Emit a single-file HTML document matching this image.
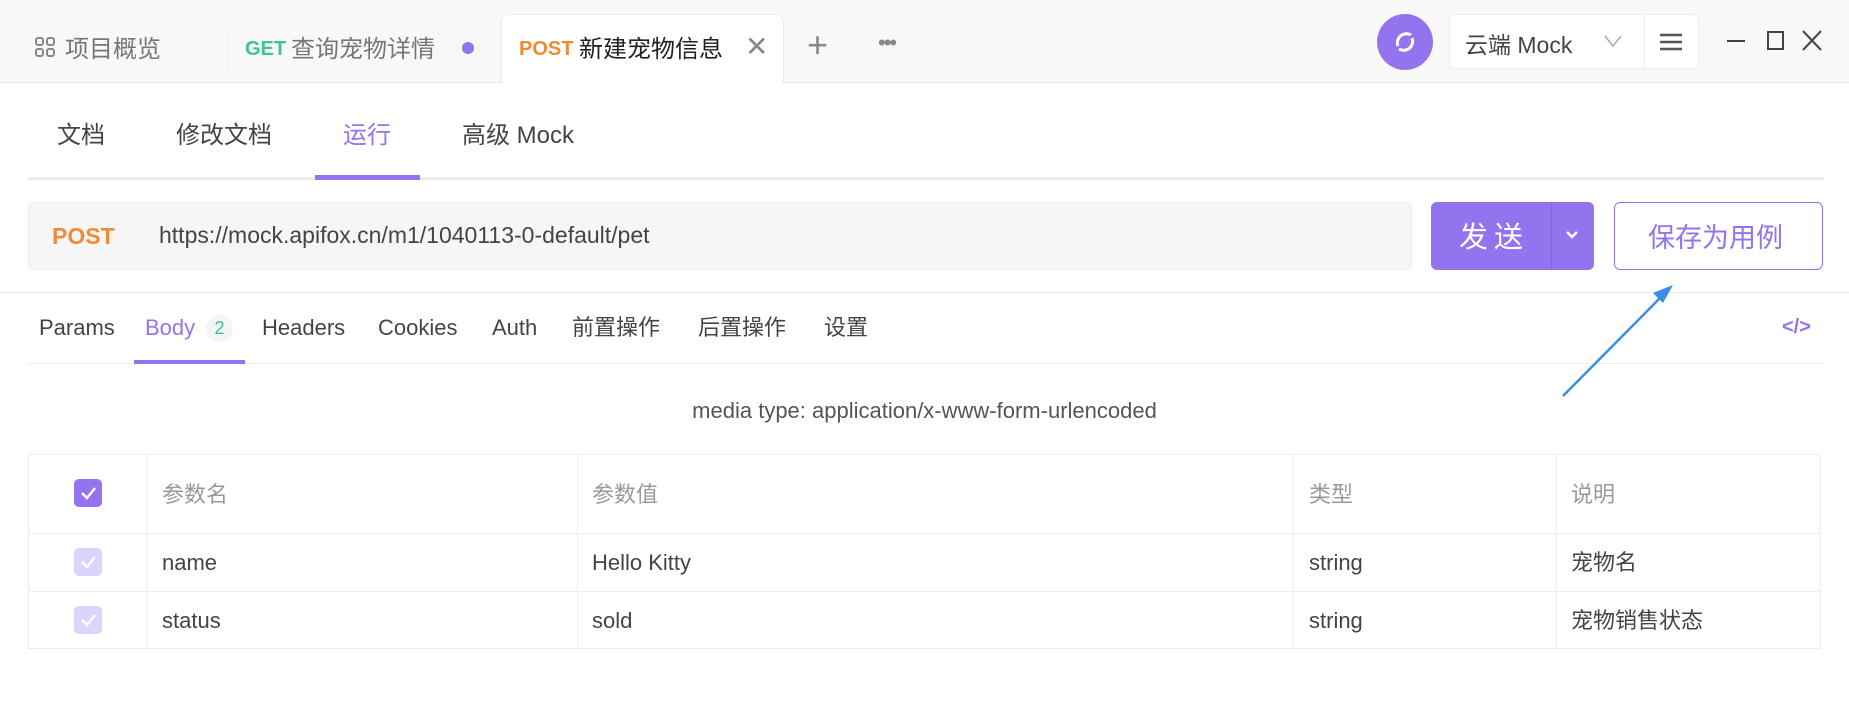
<!DOCTYPE html>
<html><head><meta charset="utf-8"><style>
*{margin:0;padding:0;box-sizing:border-box}
body{width:1849px;height:712px;background:#fff;font-family:"Liberation Sans","Noto Sans CJK SC",sans-serif;position:relative;overflow:hidden;color:#333}
.a{position:absolute;white-space:nowrap}
</style></head><body>
<div class="a" style="left:0;top:0;width:1849px;height:83px;background:#f8f8f9;border-bottom:1px solid #e8e8ec"></div>
<svg class="a" style="left:34px;top:36px" width="22" height="22" viewBox="0 0 22 22" fill="none" stroke="#888" stroke-width="2"><rect x="2" y="2" width="7" height="7" rx="2"/><rect x="13" y="2" width="7" height="7" rx="2"/><rect x="2" y="13" width="7" height="7" rx="2"/><rect x="13" y="13" width="7" height="7" rx="2"/></svg>
<div class="a" style="left:65px;top:29px;font-size:24px;color:#777">项目概览</div>
<div class="a" style="left:228px;top:30px;width:1px;height:40px;background:#eee"></div>
<div class="a" style="left:245px;top:38px;font-size:20px;font-weight:bold;color:#3cc58f">GET</div>
<div class="a" style="left:291px;top:29px;font-size:24px;color:#777">查询宠物详情</div>
<div class="a" style="left:462px;top:42px;width:12px;height:12px;border-radius:50%;background:#9373ee"></div>
<div class="a" style="left:501px;top:14px;width:283px;height:70px;background:#fff;border:1px solid #ececf0;border-bottom:none;border-radius:8px 8px 0 0"></div>
<div class="a" style="left:519px;top:38px;font-size:20px;font-weight:bold;color:#f08a35">POST</div>
<div class="a" style="left:579px;top:29px;font-size:24px;color:#222">新建宠物信息</div>
<div class="a" style="left:745px;top:30px;font-size:28px;color:#888">✕</div>
<div class="a" style="left:807px;top:24px;font-size:36px;color:#888;font-weight:300">+</div>
<div class="a" style="left:878px;top:30px;font-size:22px;color:#888;letter-spacing:-2px">•••</div>
<div class="a" style="left:1377px;top:14px;width:56px;height:56px;border-radius:50%;background:#9373ee"></div>
<svg class="a" style="left:1391px;top:28px" width="28" height="28" viewBox="0 0 28 28" fill="none" stroke="#fff" stroke-width="3"><path d="M20 7a9 9 0 0 0-13 11"/><path d="M8 21a9 9 0 0 0 13-11"/></svg>
<div class="a" style="left:1449px;top:14px;width:250px;height:55px;background:#fff;border:1px solid #eee;border-radius:6px"></div>
<div class="a" style="left:1644px;top:14px;width:1px;height:55px;background:#eee"></div>
<div class="a" style="left:1465px;top:26px;font-size:23px;color:#444">云端 Mock</div>
<svg class="a" style="left:1604px;top:34px" width="18" height="14" fill="none" stroke="#aaa" stroke-width="1.5"><path d="M1 2l8 10 8-10"/></svg>
<svg class="a" style="left:1660px;top:33px" width="22" height="18" stroke="#555" stroke-width="2.5"><path d="M0 2h22M0 9h22M0 16h22"/></svg>
<svg class="a" style="left:1725px;top:28px" width="100" height="26" fill="none" stroke="#444" stroke-width="2"><path d="M2 13h18"/><rect x="43" y="4" width="15" height="17"/><path d="M78 3l18 19M96 3L78 22"/></svg>
<div class="a" style="left:57px;top:115px;font-size:24px;color:#444">文档</div>
<div class="a" style="left:176px;top:115px;font-size:24px;color:#444">修改文档</div>
<div class="a" style="left:343px;top:115px;font-size:24px;color:#9373ee">运行</div>
<div class="a" style="left:462px;top:115px;font-size:24px;color:#444">高级 Mock</div>
<div class="a" style="left:28px;top:177px;width:1796px;height:3px;background:#ebebeb"></div>
<div class="a" style="left:315px;top:175px;width:105px;height:5px;background:#9373ee"></div>
<div class="a" style="left:28px;top:202px;width:1384px;height:68px;background:#f6f6f7;border:1px solid #ebebeb;border-radius:6px"></div>
<div class="a" style="left:52px;top:223px;font-size:23px;font-weight:bold;color:#f08a35">POST</div>
<div class="a" style="left:159px;top:222px;font-size:23px;color:#444">https://mock.apifox.cn/m1/1040113-0-default/pet</div>
<div class="a" style="left:1431px;top:202px;width:163px;height:68px;background:#9373ee;border-radius:6px"></div>
<div class="a" style="left:1551px;top:202px;width:1px;height:68px;background:#8463dd"></div>
<div class="a" style="left:1459px;top:214px;font-size:29px;color:#fff;letter-spacing:6px">发送</div>
<svg class="a" style="left:1565px;top:230px" width="14" height="10" fill="none" stroke="#fff" stroke-width="2.5"><path d="M2 2l5 5 5-5"/></svg>
<div class="a" style="left:1614px;top:202px;width:209px;height:68px;background:#fff;border:1.5px solid #9373ee;border-radius:6px"></div>
<div class="a" style="left:1648px;top:216px;font-size:27px;color:#9373ee">保存为用例</div>
<div class="a" style="left:0;top:292px;width:1849px;height:1px;background:#ebebf0"></div>
<div class="a" style="left:39px;top:315px;font-size:22px;color:#444">Params</div>
<div class="a" style="left:145px;top:315px;font-size:22px;color:#9373ee">Body</div>
<div class="a" style="left:206px;top:315px;width:27px;height:27px;border-radius:50%;background:#f4f4f4;color:#3cc58f;font-size:18px;text-align:center;line-height:27px">2</div>
<div class="a" style="left:262px;top:315px;font-size:22px;color:#444">Headers</div>
<div class="a" style="left:378px;top:315px;font-size:22px;color:#444">Cookies</div>
<div class="a" style="left:492px;top:315px;font-size:22px;color:#444">Auth</div>
<div class="a" style="left:572px;top:310px;font-size:22px;color:#444">前置操作</div>
<div class="a" style="left:698px;top:310px;font-size:22px;color:#444">后置操作</div>
<div class="a" style="left:824px;top:310px;font-size:22px;color:#444">设置</div>
<div class="a" style="left:1782px;top:316px;font-size:20px;color:#9373ee;font-weight:bold">&lt;/&gt;</div>
<div class="a" style="left:28px;top:363px;width:1796px;height:1px;background:#eee"></div>
<div class="a" style="left:134px;top:360px;width:111px;height:4px;background:#9373ee"></div>
<div class="a" style="left:0;top:398px;width:1849px;text-align:center;font-size:22px;color:#555">media type: application/x-www-form-urlencoded</div>
<svg class="a" style="left:0;top:0" width="1849" height="712"><line x1="1563" y1="396" x2="1664" y2="294" stroke="#3a8ee6" stroke-width="2.5"/><path d="M1673 285l-20 8 10 10z" fill="#3a8ee6"/></svg>
<div class="a" style="left:28px;top:454px;width:1793px;height:195px;border:1px solid #eee"></div>
<div class="a" style="left:28px;top:533px;width:1793px;height:1px;background:#eee"></div>
<div class="a" style="left:28px;top:591px;width:1793px;height:1px;background:#eee"></div>
<div class="a" style="left:146px;top:454px;width:1px;height:195px;background:#eee"></div>
<div class="a" style="left:577px;top:454px;width:1px;height:195px;background:#eee"></div>
<div class="a" style="left:1293px;top:454px;width:1px;height:195px;background:#eee"></div>
<div class="a" style="left:1556px;top:454px;width:1px;height:195px;background:#eee"></div>
<div class="a" style="left:74px;top:479px;width:28px;height:28px;border-radius:5px;background:#9373ee"></div>
<div class="a" style="left:74px;top:548px;width:28px;height:28px;border-radius:5px;background:#ddd4fb"></div>
<div class="a" style="left:74px;top:606px;width:28px;height:28px;border-radius:5px;background:#ddd4fb"></div>
<svg class="a" style="left:74px;top:479px" width="28" height="160" fill="none" stroke="#fff" stroke-width="2.5"><path d="M8 14l5 5 8-10"/><path d="M8 83l5 5 8-10"/><path d="M8 141l5 5 8-10"/></svg>
<div class="a" style="left:162px;top:477px;font-size:22px;color:#999">参数名</div>
<div class="a" style="left:592px;top:477px;font-size:22px;color:#999">参数值</div>
<div class="a" style="left:1309px;top:477px;font-size:22px;color:#999">类型</div>
<div class="a" style="left:1571px;top:477px;font-size:22px;color:#999">说明</div>
<div class="a" style="left:162px;top:550px;font-size:22px;color:#444">name</div>
<div class="a" style="left:592px;top:550px;font-size:22px;color:#444">Hello Kitty</div>
<div class="a" style="left:1309px;top:550px;font-size:22px;color:#444">string</div>
<div class="a" style="left:1571px;top:545px;font-size:22px;color:#444">宠物名</div>
<div class="a" style="left:162px;top:608px;font-size:22px;color:#444">status</div>
<div class="a" style="left:592px;top:608px;font-size:22px;color:#444">sold</div>
<div class="a" style="left:1309px;top:608px;font-size:22px;color:#444">string</div>
<div class="a" style="left:1571px;top:603px;font-size:22px;color:#444">宠物销售状态</div>
</body></html>
